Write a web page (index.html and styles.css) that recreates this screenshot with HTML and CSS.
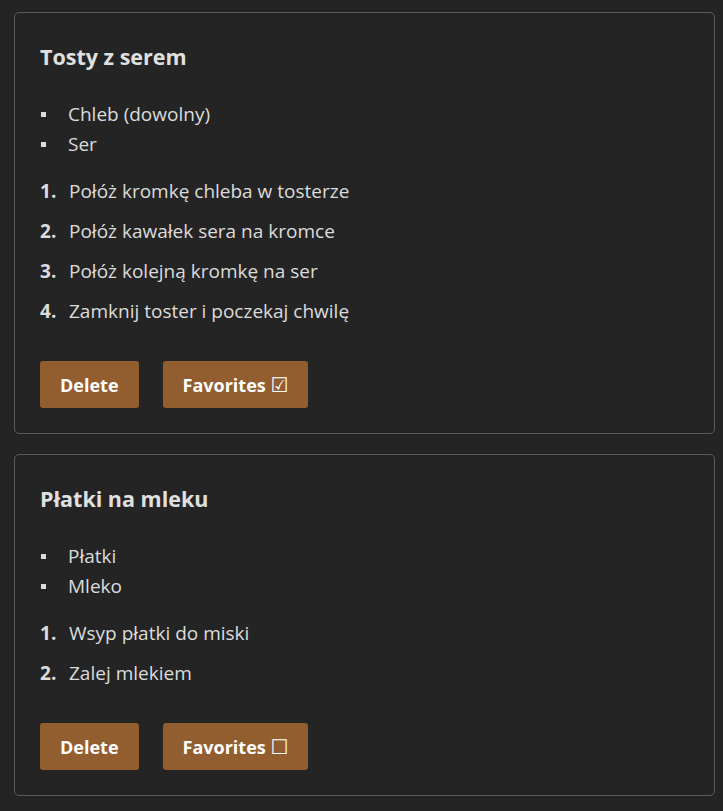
FILE: index.html
```html
<!DOCTYPE html>
<html lang="pl">
<head>
<meta charset="utf-8">
<title>Przepisy</title>
<link rel="stylesheet" href="styles.css">
</head>
<body>
<main class="recipes">
  <section class="card">
    <h2 class="title">Tosty z serem</h2>
    <ul class="ingredients">
      <li>Chleb (dowolny)</li>
      <li>Ser</li>
    </ul>
    <ol class="steps">
      <li>Połóż kromkę chleba w tosterze</li>
      <li>Połóż kawałek sera na kromce</li>
      <li>Połóż kolejną kromkę na ser</li>
      <li>Zamknij toster i poczekaj chwilę</li>
    </ol>
    <div class="actions">
      <button class="btn btn-delete">Delete</button>
      <button class="btn btn-fav">Favorites <span class="box">☑</span></button>
    </div>
  </section>
  <section class="card">
    <h2 class="title">Płatki na mleku</h2>
    <ul class="ingredients">
      <li>Płatki</li>
      <li>Mleko</li>
    </ul>
    <ol class="steps">
      <li>Wsyp płatki do miski</li>
      <li>Zalej mlekiem</li>
    </ol>
    <div class="actions">
      <button class="btn btn-delete">Delete</button>
      <button class="btn btn-fav">Favorites <span class="box">☐</span></button>
    </div>
  </section>
</main>
</body>
</html>
```
FILE: styles.css
```css
html, body {
  margin: 0;
  padding: 0;
  background: #242424;
}
body {
  font-family: "Open Sans", "Noto Sans", "DejaVu Sans", sans-serif;
  color: #dcdcdc;
  padding: 12px 8px 0 14px;
}
.recipes {
  display: flex;
  flex-direction: column;
  gap: 20px;
}
.card {
  border: 1px solid #5a5a5a;
  border-radius: 5px;
  background: #242424;
  padding: 25px 25px 25px 25px;
}
.title {
  margin: 0;
  font-size: 21.5px;
  line-height: 38px;
  font-weight: 700;
  color: #e0e0e0;
}
.ingredients {
  list-style: none;
  margin: 23px 0 0 0;
  padding: 0;
}
.ingredients li {
  display: flex;
  align-items: center;
  font-size: 19px;
  line-height: 30px;
}
.ingredients li::before {
  content: "";
  width: 5px;
  height: 5px;
  background: #dcdcdc;
  margin: 0 22px 0 1px;
  flex: none;
}
.steps {
  list-style: none;
  margin: 12px 0 0 0;
  padding: 0;
  counter-reset: step;
}
.steps li {
  counter-increment: step;
  display: flex;
  font-size: 19px;
  line-height: 40px;
}
.steps li::before {
  content: counter(step) ".";
  font-weight: 700;
  width: 29px;
  flex: none;
}
.actions {
  display: flex;
  gap: 24px;
  margin-top: 30px;
}
.btn {
  font-family: inherit;
  font-size: 18px;
  font-weight: 700;
  color: #ffffff;
  background: #925d2f;
  border: none;
  border-radius: 3px;
  height: 47px;
  padding: 0 20px;
  cursor: pointer;
}
.box {
  font-family: "DejaVu Sans", sans-serif;
  font-weight: 400;
  font-size: 20px;
  line-height: 1;
}
```
